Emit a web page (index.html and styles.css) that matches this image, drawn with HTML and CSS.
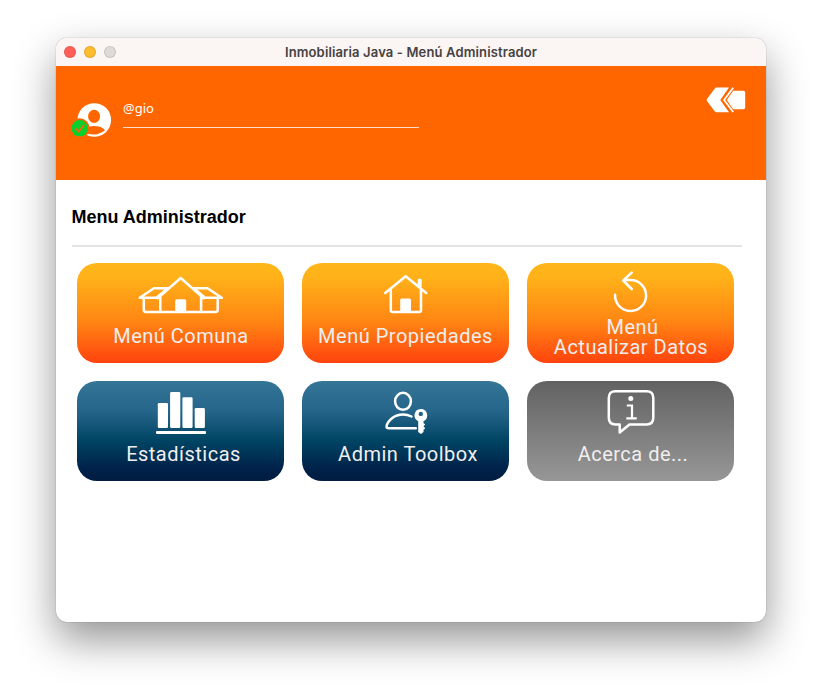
FILE: index.html
```html
<!DOCTYPE html>
<html lang="es">
<head>
<meta charset="utf-8">
<title>Inmobiliaria Java - Menú Administrador</title>
<link rel="stylesheet" href="styles.css">
</head>
<body>
<main class="window">
  <header class="titlebar">
    <div class="lights"><i class="close"></i><i class="minimize"></i><i class="maximize"></i></div>
    <span class="title">Inmobiliaria Java - Menú Administrador</span>
  </header>
  <section class="banner">
    <svg class="avatar" viewBox="0 0 42 36">
      <circle cx="23.3" cy="17" r="16.8" fill="#fff"/>
      <ellipse cx="23.1" cy="13.4" rx="6" ry="6.6" fill="#ff6600"/>
      <path d="M11.5 28Q14.5 23.3 22.5 22.9Q31 22.9 34 27.2Q29 31.2 23 31.5Q15 31.5 11.5 28Z" fill="#ff6600"/>
      <circle cx="8.7" cy="25.3" r="10" fill="#ff6600"/>
      <circle cx="8.7" cy="25.3" r="8.3" fill="#0bcf2b"/>
      <path d="M4.7 25.5L7.6 28.5L12.8 22.2" fill="none" stroke="#ff6600" stroke-width="1.7" stroke-linecap="round"/>
    </svg>
    <div class="user">@gio</div>
    <svg class="back" viewBox="0 0 40 26">
      <path d="M10.5.5H23L14.3 13L23 25.3H10.5Q9.5 25.3 8.8 24.5L1 14Q.4 13 1 12L8.8 1.4Q9.5.5 10.5.5Z" fill="#fff"/>
      <path d="M27.2.8L18.1 13L27.2 25" fill="none" stroke="#fff" stroke-width="1.8"/>
      <path d="M27.2 3.8H37.5Q39.2 3.8 39.2 5.5V20.6Q39.2 22.3 37.5 22.3H27.2L20.8 13Z" fill="#fff"/>
    </svg>
  </section>
  <section class="content">
    <h1>Menu Administrador</h1>
    <nav class="grid">
      <button class="tile orange">
        <svg viewBox="0 0 207 60"><g class="line"><path d="M80.7 35.2L103.7 15L126.7 35.2M83.3 33.5V49M124.1 33.5V49M66.8 35V46.8Q66.8 49 69 49H138.5Q140.7 49 140.7 46.8V35M91 25.3H77L62.7 34.8H82M116.5 25.3H130.5L144.8 34.8H125.5M90.5 25.5L79.5 34.8M117 25.5L128 34.8"/></g><path fill="#fff" d="M98.2 49V38Q98.2 36.3 100 36.3H107.5Q109.2 36.3 109.2 38V49Z"/></svg>
        <span class="label comuna">Menú Comuna</span>
      </button>
      <button class="tile orange">
        <svg viewBox="0 0 207 60"><g class="line"><path d="M83.2 30L103.7 13.2L124.2 30M88.8 27V47Q88.8 49 90.8 49H117Q119 49 119 47V27M117 22V17H118.4V24"/></g><path fill="#fff" d="M98.2 49V37Q98.2 35.4 100 35.4H107.3Q109 35.4 109 37V49Z"/></svg>
        <span class="label propiedades">Menú Propiedades</span>
      </button>
      <button class="tile orange double">
        <svg viewBox="0 0 207 60"><path class="line" d="M88.1 31.7A15.5 15.5 0 1 0 103.5 17H97M104.7 9.6L96.2 17.5L104.7 26"/></svg>
        <span class="label first">Menú</span>
        <span class="label datos">Actualizar Datos</span>
      </button>
      <button class="tile blue">
        <svg viewBox="0 0 207 60"><g fill="#fff"><rect x="80.8" y="22" width="10.2" height="25" rx="1.3"/><rect x="93.1" y="11" width="10.2" height="36" rx="1.3"/><rect x="105.4" y="16.2" width="10.2" height="30.8" rx="1.3"/><rect x="117.7" y="27" width="10.2" height="20" rx="1.3"/><rect x="79" y="50" width="50" height="3" rx="1"/></g></svg>
        <span class="label estadisticas">Estadísticas</span>
      </button>
      <button class="tile blue">
        <svg viewBox="0 0 207 60"><g class="line"><ellipse cx="101" cy="20.3" rx="7.9" ry="8.5"/><path d="M109.5 35.5C102 31.6 93 33.5 88.4 38.7Q84.6 42.8 84.6 45.7Q84.6 47.2 86.5 47.2H113.8"/></g><path fill="#fff" fill-rule="evenodd" d="M118.7 28A6.4 6.4 0 0 1 121.5 40.2V42L123.2 43.5L121.5 45.3L123.2 47.2L121.5 49.1V51L119 53L116.2 51V40.2A6.4 6.4 0 0 1 118.7 28ZM118.8 30.7A2.2 2.2 0 1 0 118.8 35.1A2.2 2.2 0 1 0 118.8 30.7Z"/></svg>
        <span class="label toolbox">Admin Toolbox</span>
      </button>
      <button class="tile gray">
        <svg viewBox="0 0 207 60"><path class="line" d="M88.5 10.3H119.5Q126.3 10.3 126.3 17V36.8Q126.3 43.5 119.5 43.5H102.5L92.7 51.5V43.5H88.5Q81.8 43.5 81.8 36.8V17Q81.8 10.3 88.5 10.3Z"/><circle cx="103.8" cy="17.4" r="2.5" fill="#fff"/><path d="M99.8 24.5H105V37.3M99.3 37.3H109.7" fill="none" stroke="#fff" stroke-width="2.2"/></svg>
        <span class="label acerca">Acerca de...</span>
      </button>
    </nav>
  </section>
</main>
</body>
</html>
```
FILE: styles.css
```css
* { box-sizing: border-box; }
body {
  margin: 0;
  height: 696px;
  padding: 38px 56px;
  background: #fff;
  overflow: hidden;
  font-family: "Liberation Sans", sans-serif;
}
.window {
  width: 710px;
  height: 584px;
  border-radius: 11px;
  background: #fff;
  overflow: hidden;
  box-shadow: 0 0 1px rgba(0,0,0,.55), 0 18px 42px rgba(0,0,0,.42);
}
.titlebar {
  height: 28px;
  display: grid;
  grid-template-columns: 100px 1fr 100px;
  align-items: center;
  background: #fbf5f3;
}
.lights { display: flex; gap: 8px; padding-left: 8px; }
.lights i { width: 12px; height: 12px; border-radius: 50%; border: 1px solid rgba(0,0,0,.1); }
.close { background: #ff5f57; }
.minimize { background: #febc2e; }
.maximize { background: #dedad8; }
.title {
  text-align: center;
  font: 600 13px/27px Inter, sans-serif;
  letter-spacing: .14px;
  color: #464242;
  white-space: nowrap;
}
.banner {
  height: 114px;
  display: flex;
  align-items: flex-start;
  padding: 0 20px 0 15px;
  background: #ff6600;
}
.avatar { width: 42px; height: 36px; margin-top: 37px; }
.user {
  width: 296px;
  height: 28px;
  margin: 34px 0 0 10px;
  border-bottom: 1px solid #ffe0cc;
  color: #fff;
  font: 13px/17px "Noto Sans", sans-serif;
}
.back { width: 40px; height: 26px; margin: 21px 0 0 auto; }
.content { padding: 25px 24px 0 15px; }
h1 {
  height: 42px;
  margin: 0 0 16px 1px;
  padding-top: 1px;
  border-bottom: 2px solid #e3e3e3;
  font-size: 18px;
  line-height: 23px;
  text-indent: -.6px;
  color: #000;
}
.grid {
  display: grid;
  grid-template-columns: repeat(3, 207px);
  gap: 18px;
  padding-left: 6px;
}
.tile {
  width: 207px;
  height: 100px;
  padding: 0;
  border: 0;
  border-radius: 20px;
  display: flex;
  flex-direction: column;
  align-items: center;
  color: #f1eeee;
}
.tile svg { width: 207px; height: 60px; flex: none; }
.orange { background: linear-gradient(#ffb719 0%, #ffb119 15%, #ff8613 58%, #ff430e 100%); }
.blue { background: linear-gradient(#357596 0%, #25658a 30%, #004463 60%, #002149 88%, #001c40 100%); }
.gray { background: linear-gradient(#626262, #979797); }
.line { fill: none; stroke: #fff; stroke-width: 2.5; stroke-linecap: round; stroke-linejoin: round; }
.label {
  font: 380 20px/20px Roboto, sans-serif;
  letter-spacing: .5px;
  white-space: nowrap;
  margin-top: 3px;
}
.comuna { margin-left: 1px; }
.double .first { margin: -6px 0 0 4px; }
.double .datos { margin: 0 0 0 1px; }
.estadisticas { margin-left: 6px; }
.toolbox { margin-left: 5px; }
.acerca { margin-left: 5px; }
```
